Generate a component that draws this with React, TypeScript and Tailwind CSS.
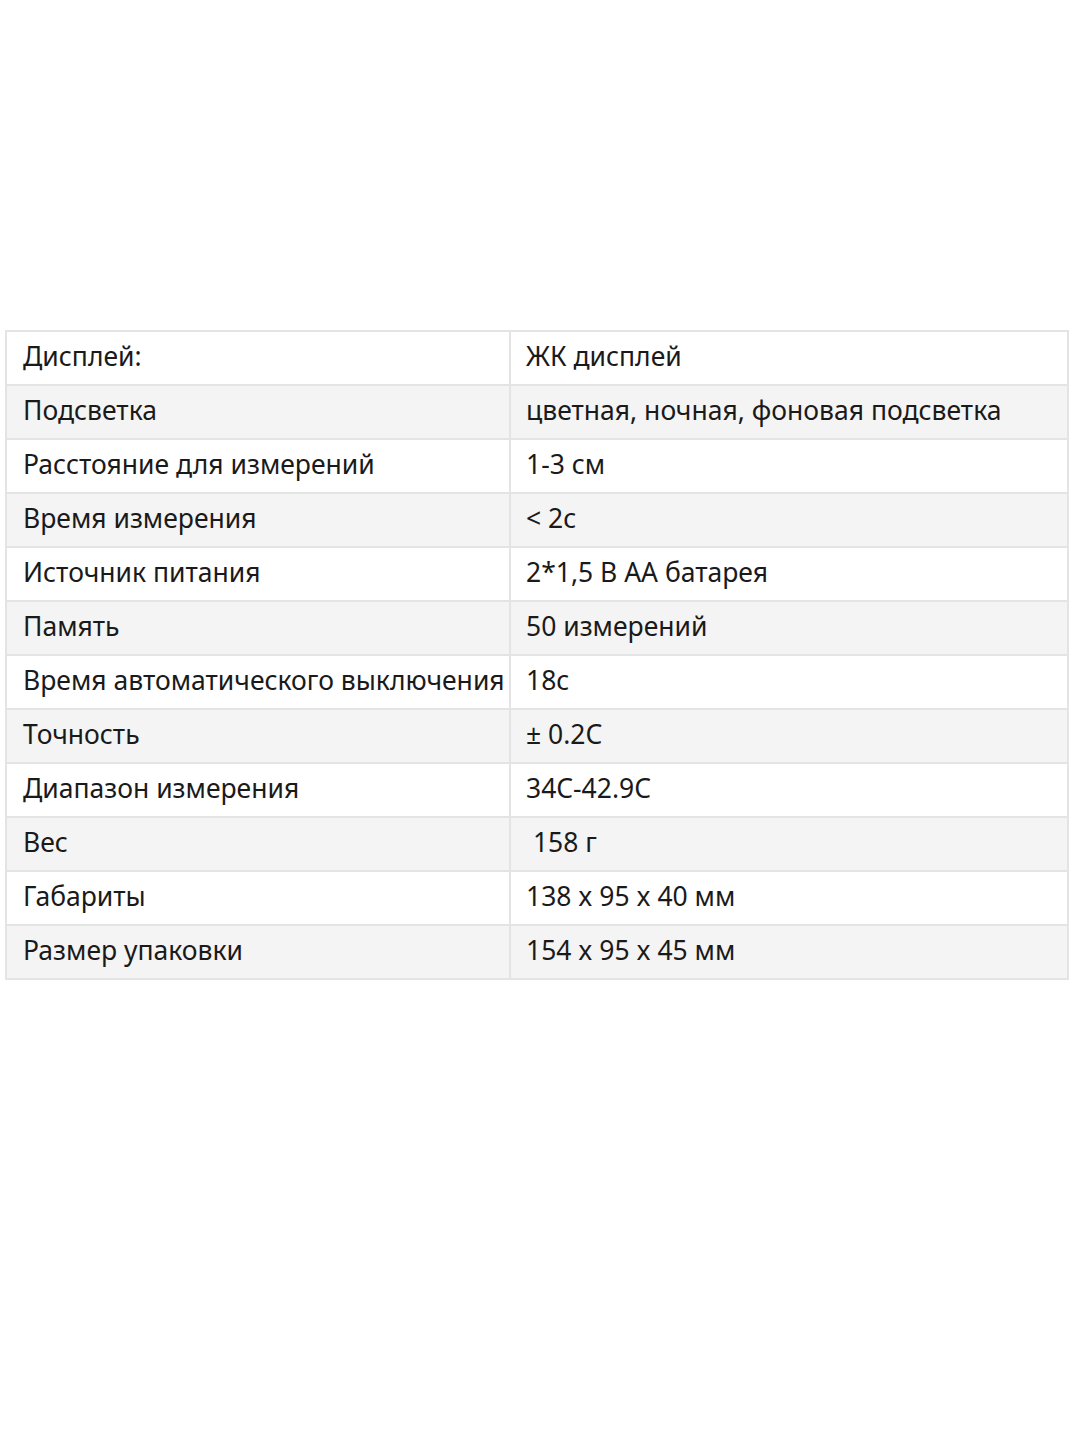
import React from "react";

const rows: [string, string][] = [
  ["Дисплей:", "ЖК дисплей"],
  ["Подсветка", "цветная, ночная, фоновая подсветка"],
  ["Расстояние для измерений", "1-3 см"],
  ["Время измерения", "< 2с"],
  ["Источник питания", "2*1,5 В АА батарея"],
  ["Память", "50 измерений"],
  ["Время автоматического выключения", "18с"],
  ["Точность", "± 0.2C"],
  ["Диапазон измерения", "34C-42.9C"],
  ["Вес", "\u00a0158 г"],
  ["Габариты", "138 x 95 x 40 мм"],
  ["Размер упаковки", "154 x 95 x 45 мм"],
];

export default function App() {
  return (
    <div className="w-[1080px] h-[1440px] bg-white pt-[330px]" style={{ fontFamily: '"Noto Sans", "Open Sans", sans-serif' }}>
      <table className="ml-[5px] w-[1064px] border-collapse border-2 border-[#e4e4e4] text-[26.5px] text-[#1a1a1a]">
        <tbody>
          {rows.map(([k, v], i) => (
            <tr key={i} className={i % 2 === 1 ? "bg-[#f4f4f4]" : "bg-white"}>
              <td className="w-[504px] h-[54px] border-2 border-[#e4e4e4] pl-[16px] p-0 pb-[3px] leading-none whitespace-nowrap">{k}</td>
              <td className="h-[54px] border-2 border-[#e4e4e4] pl-[15px] p-0 pb-[3px] leading-none whitespace-nowrap">{v}</td>
            </tr>
          ))}
        </tbody>
      </table>
    </div>
  );
}
